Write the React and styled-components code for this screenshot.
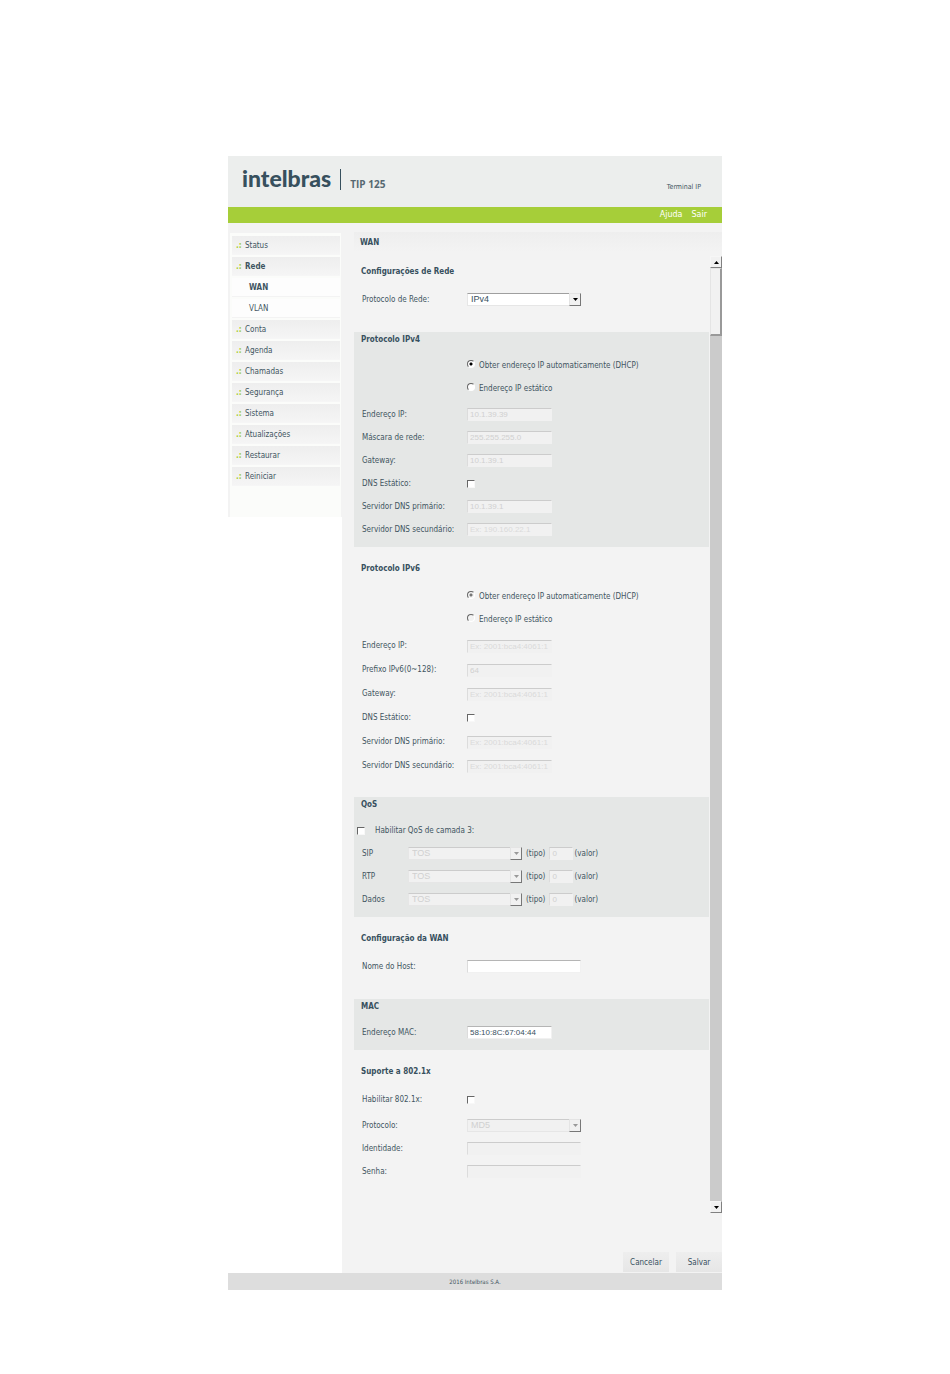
import { useState } from "react";
import { createGlobalStyle, styled, ThemeProvider } from "styled-components";

const theme = {
    colors: {
        header: "#eceeed",
        green: "#a6ce39",
        panel: "#f3f3f3",
        tinted: "#e5e7e6",
        text: "#3f5561",
        title: "#37505e",
        muted: "#d0d0d0",
        footer: "#dddddd",
    },
};

const GlobalStyle = createGlobalStyle`
    * {
        box-sizing: border-box;
    }
    body {
        margin: 0;
        background: #fff;
        color: ${({ theme }) => theme.colors.text};
        font: 8px/12px "DejaVu Sans Condensed", "DejaVu Sans", sans-serif;
    }
`;

const Page = styled.div`
    width: 52%;
    min-width: 494px;
    margin: 0 auto;
    padding: 156px 0 84px;
`;

const Header = styled.header`
    display: flex;
    align-items: flex-end;
    height: 51px;
    padding: 0 21px 15px 14px;
    background: ${({ theme }) => theme.colors.header};
`;

const Logo = styled.span`
    padding: 0 9px 3px 0;
    font: 900 23px/22px Lato, sans-serif;
    color: ${({ theme }) => theme.colors.title};
`;

const Model = styled.h1`
    flex: 1;
    height: 21px;
    margin: 0 0 2px;
    padding: 8px 0 0 9px;
    border-left: 1px solid ${({ theme }) => theme.colors.title};
    font: bold 10px/14px "Open Sans", sans-serif;
    color: #566871;
`;

const Terminal = styled.span`
    font-size: 7px;
    line-height: 10px;
`;

const TopBar = styled.nav`
    display: flex;
    justify-content: flex-end;
    gap: 9px;
    height: 16px;
    padding: 0 15px 0 0;
    background: ${({ theme }) => theme.colors.green};

    a {
        color: #fff;
        font: 8px/15px "DejaVu Sans", sans-serif;
        text-decoration: none;
    }
`;

const Body = styled.div`
    display: flex;
    align-items: flex-start;
`;

const Sidebar = styled.aside`
    width: 114px;
    min-height: 294px;
    padding: 10px 1px 0 2px;
    background: ${({ theme }) => theme.colors.panel};
`;

const Menu = styled.ul`
    min-height: 284px;
    margin: 0;
    padding: 3px 1px 0 2px;
    list-style: none;
    background: #fbfcfa;
`;

const MenuLink = styled.a`
    display: block;
    height: 19px;
    margin-bottom: 2px;
    padding-left: ${({ $sub }) => ($sub ? 17 : 4)}px;
    background: ${({ $sub }) => ($sub ? "#fdfdfd" : "linear-gradient(#eeeeee, #f5f5f5)")};
    border-bottom: 1px solid ${({ $sub }) => ($sub ? "#f3f3f3" : "#f6f6f6")};
    color: ${({ theme }) => theme.colors.text};
    font-size: 8px;
    line-height: 20px;
    font-weight: ${({ $active }) => ($active ? "bold" : "normal")};
    text-decoration: none;
`;

const Bullet = styled.span`
    display: inline-block;
    width: 9px;
    font-weight: bold;
    color: ${({ theme }) => theme.colors.green};
`;

const Main = styled.main`
    flex: 1;
    min-width: 0;
    padding: 9px 0 1px 12px;
    background: ${({ theme }) => theme.colors.panel};
`;

const PageTitle = styled.h2`
    height: 20px;
    margin: 0 0 4px;
    padding-left: 6px;
    background: linear-gradient(#eeeeee, #f3f3f3);
    color: ${({ theme }) => theme.colors.title};
    font-size: 8px;
    line-height: 21px;
`;

const Scroller = styled.div`
    display: flex;
`;

const Form = styled.form`
    flex: 1;
    padding-right: 1px;
`;

const Section = styled.section`
    padding-top: ${({ $tinted, $top = 14 }) => ($tinted ? 0 : $top)}px;
    padding-bottom: ${({ $tinted, $bottom = 21 }) => ($tinted ? 6 : $bottom)}px;
    background: ${({ $tinted, theme }) => ($tinted ? theme.colors.tinted : "none")};
`;

const SectionTitle = styled.h3`
    margin: 0 0 ${({ $tinted }) => ($tinted ? 6 : 8)}px;
    padding-left: 7px;
    color: ${({ theme }) => theme.colors.title};
    font-size: 8px;
    line-height: 16px;
`;

const Group = styled.div`
    margin-top: 3px;
`;

const Row = styled.div`
    display: flex;
    align-items: center;
    height: ${({ $tall }) => ($tall ? 24 : 23)}px;
    padding-left: ${({ $flush }) => ($flush ? 3 : 8)}px;
`;

const Label = styled.label`
    width: ${({ $short }) => ($short ? 46 : 105)}px;
    white-space: nowrap;
`;

const RadioRow = styled(Row)`
    padding-left: 113px;
`;

const TextLabel = styled.label`
    padding: 0 4px 0 ${({ $gap }) => $gap || 4}px;
    white-space: nowrap;
`;

const TextInput = styled.input`
    width: ${({ $size }) => ({ small: 24, wide: 114 }[$size] || 85)}px;
    height: 13px;
    padding: 0 2px;
    border: 1px solid #f1f1f1;
    border-top-color: #b5b5b5;
    border-left-color: #dcdcdc;
    border-radius: 0;
    outline: none;
    background: #fff;
    color: ${({ theme }) => theme.colors.title};
    font: 8px/11px "Liberation Sans", sans-serif;

    &:disabled {
        background: #f1f1f1;
        border-top-color: #cccccc;
        color: ${({ theme }) => theme.colors.muted};
    }
    &::placeholder {
        color: #dadada;
    }
`;

const SelectBox = styled.span`
    display: grid;
    width: 114px;
    height: 13px;

    > * {
        grid-area: 1 / 1;
    }
`;

const Select = styled.select`
    appearance: none;
    width: 100%;
    height: 13px;
    padding: 0 3px;
    border: 1px solid #e6e6e6;
    border-top-color: #9f9f9f;
    border-radius: 0;
    background: #fff;
    color: ${({ theme }) => theme.colors.title};
    font: 9px/11px "Liberation Sans", sans-serif;

    &:disabled {
        opacity: 1;
        background: #f1f1f1;
        border-top-color: #cccccc;
        color: ${({ theme }) => theme.colors.muted};
    }
`;

const ArrowButton = styled.span`
    display: flex;
    align-items: center;
    justify-content: center;
    justify-self: end;
    width: 12px;
    height: 13px;
    border: 1px solid #e4e4e4;
    border-right-color: #777;
    border-bottom-color: #777;
    background: #f1f1f1;
    color: ${({ $disabled }) => ($disabled ? "#999" : "#000")};
    pointer-events: none;
`;

const Check = styled.input`
    appearance: none;
    width: 8px;
    height: 8px;
    margin: 0;
    border: 1px solid #f8f8f8;
    border-top-color: #666;
    border-left-color: #666;
    background: #fff;

    &:checked {
        background: #555;
    }
`;

const Radio = styled.input`
    appearance: none;
    width: 8px;
    height: 8px;
    margin: 0 0 3px;
    border: 1px solid #fff;
    border-top-color: #666;
    border-left-color: #666;
    border-radius: 50%;
    background: #fff;

    &:checked {
        background: radial-gradient(circle, #000 1px, #fff 2px);
    }
    &:disabled {
        background: #f3f3f3;
    }
    &:disabled:checked {
        background: radial-gradient(circle, #777 1px, #f3f3f3 2px);
    }
`;

const ScrollBar = styled.div`
    display: flex;
    flex-direction: column;
    width: 12px;
    background: #cbcbcb;
`;

const ScrollButton = styled.button`
    display: flex;
    align-items: center;
    justify-content: center;
    height: 12px;
    padding: 0;
    border: 1px solid #f6f6f6;
    border-right-color: #808080;
    border-bottom-color: #808080;
    background: #f1f1f1;
    color: #000;
`;

const Thumb = styled.div`
    height: 68px;
    margin-bottom: auto;
    border: 1px solid #e4e4e4;
    border-right: 2px solid #999;
    border-bottom: 2px solid #999;
    background: #f1f1f1;
`;

const Actions = styled.div`
    display: flex;
    justify-content: flex-end;
    gap: 7px;
    margin-top: 39px;
`;

const Button = styled.button`
    width: 46px;
    height: 20px;
    padding: 1px 0 0;
    border: 0;
    background: linear-gradient(#eeeeee, #e6e6e6);
    color: ${({ theme }) => theme.colors.title};
    font: inherit;
`;

const Footer = styled.footer`
    height: 17px;
    background: ${({ theme }) => theme.colors.footer};
    font-size: 6px;
    line-height: 17px;
    text-align: center;
`;

const Triangle = ({ up }) => (
    <svg width="5" height="3" viewBox="0 0 5 3" aria-hidden="true">
        <path d={up ? "M0 3L2.5 0L5 3Z" : "M0 0H5L2.5 3Z"} fill="currentColor" />
    </svg>
);

const menu = [
    { name: "Status" },
    { name: "Rede", active: true },
    { name: "WAN", sub: true, active: true },
    { name: "VLAN", sub: true },
    { name: "Conta" },
    { name: "Agenda" },
    { name: "Chamadas" },
    { name: "Segurança" },
    { name: "Sistema" },
    { name: "Atualizações" },
    { name: "Restaurar" },
    { name: "Reiniciar" },
];

const Field = ({ id, label, tall, ...rest }) => (
    <Row $tall={tall}>
        <Label htmlFor={id}>{label}</Label>
        <TextInput id={id} type="text" {...rest} />
    </Row>
);

const CheckField = ({ id, label, tall }) => (
    <Row $tall={tall}>
        <Label htmlFor={id}>{label}</Label>
        <Check id={id} type="checkbox" />
    </Row>
);

const Dropdown = ({ id, options, disabled, ...rest }) => (
    <SelectBox>
        <Select id={id} disabled={disabled} {...rest}>
            {options.map((option) => (
                <option key={option}>{option}</option>
            ))}
        </Select>
        <ArrowButton $disabled={disabled}>
            <Triangle />
        </ArrowButton>
    </SelectBox>
);

const AddressMode = ({ name, disabled }) => {
    const [mode, setMode] = useState("dhcp");

    return (
        <>
            <RadioRow>
                <Radio
                    id={`${name}-dhcp`}
                    type="radio"
                    name={name}
                    checked={mode === "dhcp"}
                    disabled={disabled}
                    onChange={() => setMode("dhcp")}
                />
                <TextLabel htmlFor={`${name}-dhcp`}>Obter endereço IP automaticamente (DHCP)</TextLabel>
            </RadioRow>
            <RadioRow>
                <Radio
                    id={`${name}-static`}
                    type="radio"
                    name={name}
                    checked={mode === "static"}
                    disabled={disabled}
                    onChange={() => setMode("static")}
                />
                <TextLabel htmlFor={`${name}-static`}>Endereço IP estático</TextLabel>
            </RadioRow>
        </>
    );
};

export default () => {
    return (
        <ThemeProvider theme={theme}>
            <GlobalStyle />
            <Page>
                <Header>
                    <Logo>intelbras</Logo>
                    <Model>TIP 125</Model>
                    <Terminal>Terminal IP</Terminal>
                </Header>
                <TopBar>
                    <a href="#ajuda">Ajuda</a>
                    <a href="#sair">Sair</a>
                </TopBar>
                <Body>
                    <Sidebar>
                        <Menu>
                            {menu.map(({ name, sub, active }) => (
                                <li key={name}>
                                    <MenuLink href={`#${name}`} $sub={sub} $active={active}>
                                        {!sub && <Bullet>.:</Bullet>}
                                        {name}
                                    </MenuLink>
                                </li>
                            ))}
                        </Menu>
                    </Sidebar>
                    <Main>
                        <PageTitle>WAN</PageTitle>
                        <Scroller>
                            <Form id="wan" onSubmit={(e) => e.preventDefault()}>
                                <Section $top={8}>
                                    <SectionTitle>Configurações de Rede</SectionTitle>
                                    <Row>
                                        <Label htmlFor="protocol">Protocolo de Rede:</Label>
                                        <Dropdown id="protocol" options={["IPv4", "IPv6"]} />
                                    </Row>
                                </Section>

                                <Section $tinted>
                                    <SectionTitle $tinted>Protocolo IPv4</SectionTitle>
                                    <AddressMode name="ipv4" />
                                    <Group>
                                        <Field id="ip4" label="Endereço IP:" defaultValue="10.1.39.39" disabled />
                                        <Field id="mask4" label="Máscara de rede:" defaultValue="255.255.255.0" disabled />
                                        <Field id="gateway4" label="Gateway:" defaultValue="10.1.39.1" disabled />
                                        <CheckField id="dns4" label="DNS Estático:" />
                                        <Field id="dns4a" label="Servidor DNS primário:" defaultValue="10.1.39.1" disabled />
                                        <Field id="dns4b" label="Servidor DNS secundário:" placeholder="Ex: 190.160.22.1" disabled />
                                    </Group>
                                </Section>

                                <Section $bottom={19}>
                                    <SectionTitle>Protocolo IPv6</SectionTitle>
                                    <AddressMode name="ipv6" disabled />
                                    <Group>
                                        <Field tall id="ip6" label="Endereço IP:" placeholder="Ex: 2001:bca4:4061:1" disabled />
                                        <Field tall id="prefix6" label="Prefixo IPv6(0~128):" defaultValue="64" disabled />
                                        <Field tall id="gateway6" label="Gateway:" placeholder="Ex: 2001:bca4:4061:1" disabled />
                                        <CheckField tall id="dns6" label="DNS Estático:" />
                                        <Field tall id="dns6a" label="Servidor DNS primário:" placeholder="Ex: 2001:bca4:4061:1" disabled />
                                        <Field tall id="dns6b" label="Servidor DNS secundário:" placeholder="Ex: 2001:bca4:4061:1" disabled />
                                    </Group>
                                </Section>

                                <Section $tinted>
                                    <SectionTitle $tinted>QoS</SectionTitle>
                                    <Row $flush>
                                        <Check id="qos" type="checkbox" />
                                        <TextLabel htmlFor="qos" $gap={10}>Habilitar QoS de camada 3:</TextLabel>
                                    </Row>
                                    {["SIP", "RTP", "Dados"].map((name) => (
                                        <Row key={name}>
                                            <Label $short htmlFor={`${name}-type`}>{name}</Label>
                                            <Dropdown id={`${name}-type`} options={["TOS"]} disabled />
                                            <TextLabel htmlFor={`${name}-type`}>(tipo)</TextLabel>
                                            <TextInput id={`${name}-value`} $size="small" defaultValue="0" disabled />
                                            <TextLabel htmlFor={`${name}-value`} $gap={1}>(valor)</TextLabel>
                                        </Row>
                                    ))}
                                </Section>

                                <Section>
                                    <SectionTitle>Configuração da WAN</SectionTitle>
                                    <Field id="host" label="Nome do Host:" $size="wide" />
                                </Section>

                                <Section $tinted>
                                    <SectionTitle $tinted>MAC</SectionTitle>
                                    <Field id="mac" label="Endereço MAC:" defaultValue="58:10:8C:67:04:44" />
                                </Section>

                                <Section $bottom={30}>
                                    <SectionTitle>Suporte a 802.1x</SectionTitle>
                                    <CheckField id="dot1x" label="Habilitar 802.1x:" />
                                    <Group>
                                        <Row>
                                            <Label htmlFor="auth">Protocolo:</Label>
                                            <Dropdown id="auth" options={["MD5"]} disabled />
                                        </Row>
                                        <Field id="identity" label="Identidade:" $size="wide" disabled />
                                        <Field id="password" label="Senha:" $size="wide" disabled />
                                    </Group>
                                </Section>
                            </Form>
                            <ScrollBar>
                                <ScrollButton type="button" aria-label="Subir"><Triangle up /></ScrollButton>
                                <Thumb />
                                <ScrollButton type="button" aria-label="Descer"><Triangle /></ScrollButton>
                            </ScrollBar>
                        </Scroller>
                        <Actions>
                            <Button type="reset" form="wan">Cancelar</Button>
                            <Button type="submit" form="wan">Salvar</Button>
                        </Actions>
                    </Main>
                </Body>
                <Footer>2016 Intelbras S.A.</Footer>
            </Page>
        </ThemeProvider>
    );
};
